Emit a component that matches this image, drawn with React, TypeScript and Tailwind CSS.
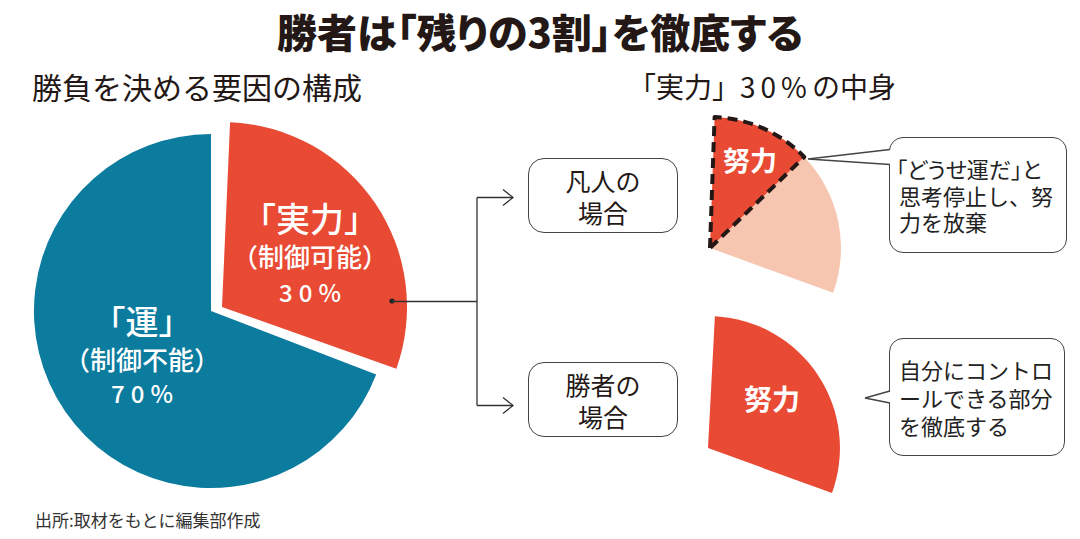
import React from "react";

const FONT = { fontFamily: '"Noto Sans CJK JP", "Noto Sans", sans-serif' };

export default function App() {
  return (
    <div
      className="relative flex h-[539px] w-[1080px] flex-col overflow-hidden bg-white text-[#231815]"
      style={FONT}
    >
      {/* Title */}
      <h1 className="pt-[8px] text-center text-[40px] font-black leading-[46px] [font-feature-settings:'palt']">
        勝者は「残りの3割」を徹底する
      </h1>

      {/* Subtitles */}
      <div className="mt-[14px] flex items-center">
        <div className="w-[596px] pl-[32px] text-[30px] leading-[36px]">勝負を決める要因の構成</div>
        <div className="pl-[32px] text-[28px] leading-[36px]">
          「実力」<span className="tracking-[5px]">30%</span>の中身
        </div>
      </div>

      <div className="flex-1" />

      {/* Footer */}
      <div className="pb-[8px] pl-[35px] text-[17px] leading-[22px] text-[#333]">出所:取材をもとに編集部作成</div>

      {/* Drawings */}
      <svg className="pointer-events-none absolute inset-0" width="1080" height="539" viewBox="0 0 1080 539">
        {/* Left pie */}
        <path d="M211,311 L376.2,374.4 A177,177 0 1 1 211,134 Z" fill="#0b7b9e" />
        <path d="M222,307 L230.1,122.2 A185,185 0 0 1 396.4,368.8 Z" fill="#e84a34" />

        {/* Connector */}
        <circle cx="392" cy="301" r="2.6" fill="#222" />
        <g fill="none" stroke="#333" strokeWidth="1.3">
          <line x1="392" y1="301.5" x2="477" y2="301.5" />
          <line x1="477" y1="197.5" x2="477" y2="405.5" />
          <line x1="477" y1="197.5" x2="513" y2="197.5" />
          <line x1="477" y1="405.5" x2="513" y2="405.5" />
          <polyline points="503,189.5 513,197.5 503,205.5" />
          <polyline points="503,397.5 513,405.5 503,413.5" />
        </g>

        {/* Top wedges */}
        <path d="M710,248 L804.2,157 A131,131 0 0 1 833.1,292.8 Z" fill="#f6c6b1" />
        <path
          d="M710,248 L714.6,117.1 A131,131 0 0 1 804.2,157 Z"
          fill="#e84a34"
          stroke="#231815"
          strokeWidth="4"
          strokeDasharray="10 6"
          strokeLinejoin="round"
        />

        {/* Bottom wedge */}
        <path d="M708,448 L714.9,316.2 A132,132 0 0 1 832,493.1 Z" fill="#e84a34" />
      </svg>

      {/* Red pie label */}
      <div className="absolute left-[210px] top-[198px] w-[200px] text-center font-medium text-white">
        <div className="text-[34px] leading-[40px]">「実力」</div>
        <div className="text-[26px] leading-[36px]">（制御可能）</div>
        <div className="pl-[6px] text-[24px] leading-[36px] tracking-[6px]">30%</div>
      </div>

      {/* Blue pie label */}
      <div className="absolute left-[42px] top-[299px] w-[200px] text-center font-medium text-white">
        <div className="text-[33px] leading-[42px]">「運」</div>
        <div className="text-[26px] leading-[36px]">（制御不能）</div>
        <div className="pl-[6px] text-[24px] leading-[32px] tracking-[6px]">70%</div>
      </div>

      {/* Case boxes */}
      <div className="absolute left-[528px] top-[158px] flex h-[75px] w-[150px] flex-col items-center justify-center rounded-[16px] border-[1.5px] border-[#444] text-[25px] leading-[32px]">
        <div>凡人の</div>
        <div>場合</div>
      </div>
      <div className="absolute left-[528px] top-[362px] flex h-[75px] w-[150px] flex-col items-center justify-center rounded-[16px] border-[1.5px] border-[#444] text-[25px] leading-[32px]">
        <div>勝者の</div>
        <div>場合</div>
      </div>

      {/* Wedge labels */}
      <div className="absolute left-[700px] top-[142px] w-[100px] text-center text-[27px] font-bold leading-[36px] text-white">努力</div>
      <div className="absolute left-[722px] top-[380px] w-[100px] text-center text-[28px] font-bold leading-[36px] text-white">努力</div>

      {/* Callout 1 */}
      <div className="absolute left-[889px] top-[137px] flex h-[116px] w-[178px] flex-col justify-center rounded-[14px] border-[1.5px] border-[#444] bg-white pl-[6px] text-[22px] leading-[26.5px] text-[#222]">
        <div className="whitespace-nowrap [font-feature-settings:'palt']">「どうせ運だ」と</div>
        <div className="pl-[3px]">思考停止し、努</div>
        <div className="pl-[3px]">力を放棄</div>
      </div>
      {/* Callout 2 */}
      <div className="absolute left-[889px] top-[338px] flex h-[118px] w-[176px] flex-col justify-center rounded-[14px] border-[1.5px] border-[#444] bg-white pl-[9px] text-[22px] leading-[28px] text-[#222]">
        <div>自分にコントロ</div>
        <div>ールできる部分</div>
        <div>を徹底する</div>
      </div>

      {/* Callout tails */}
      <svg className="pointer-events-none absolute inset-0" width="1080" height="539" viewBox="0 0 1080 539">
        <polygon points="891,149.5 808,159 891,164.5" fill="#fff" />
        <polyline points="890,149.5 808,159 890,164.5" fill="none" stroke="#444" strokeWidth="1.3" />
        <polygon points="891,391 865,398 891,403" fill="#fff" />
        <polyline points="890,391 865,398 890,403" fill="none" stroke="#444" strokeWidth="1.3" />
      </svg>
    </div>
  );
}
